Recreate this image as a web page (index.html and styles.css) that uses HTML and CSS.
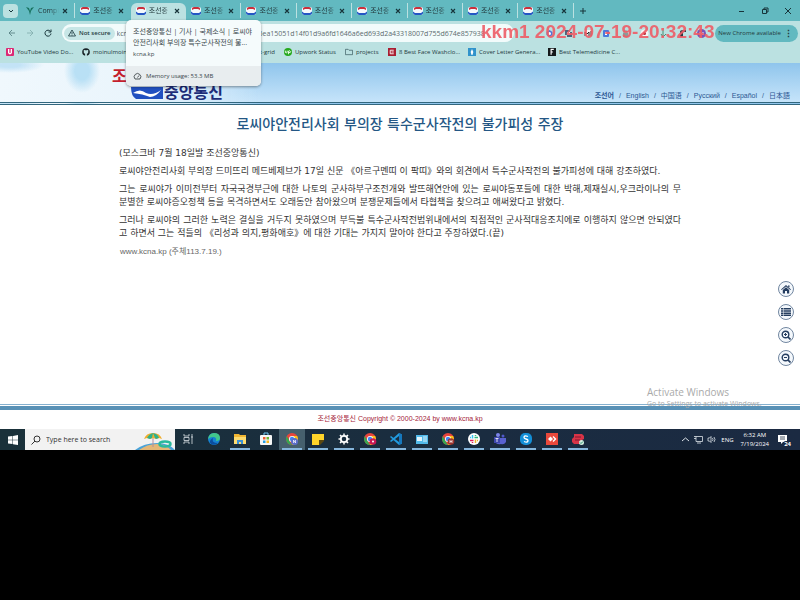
FILE: index.html
```html
<!DOCTYPE html>
<html lang="ko">
<head>
<meta charset="utf-8">
<title>조선중앙통신 | 기사 | 국제소식</title>
<link rel="stylesheet" href="styles.css">
</head>
<body>
<svg class="defs" aria-hidden="true">
  <symbol id="kcna" viewBox="0 0 10 8"><rect width="10" height="8" rx="2" fill="#f4f8fc"/><path d="M1 3V1.500Q1 0 3 0h4q2 0 2 1.500V3L7 2H3z" fill="#c9303c"/><path d="M0 4.500l2 1.500h6l2-1.500V6.500Q9 8 7.500 8h-5Q0 8 0 6z" fill="#2456c4"/></symbol>
  <symbol id="x" viewBox="0 0 6 6"><path d="M1 1l4 4M5 1L1 5" stroke="#17343a" stroke-width="1.100"/></symbol>
  <symbol id="chrome" viewBox="0 0 14 14"><circle cx="7" cy="7" r="6" fill="#e8453c"/><path d="M1.800 4L5 10l2 3A6 6 0 0 1 1.800 4z" fill="#33a852"/><path d="M7 4h5.200A6 6 0 0 1 7 13l3-5z" fill="#fbc116"/><circle cx="7" cy="7" r="3" fill="#fff"/><circle cx="7" cy="7" r="2.200" fill="#4285f4"/></symbol>
</svg>

<div class="browser">
  <div class="tabs">
    <button class="menu" aria-label="Search tabs"><svg viewBox="0 0 8 8" width="8" height="8"><path d="M2 3l2 2 2-2" fill="none" stroke="#17343a"/></svg></button>
    <div class="tab"><svg class="fav" viewBox="0 0 10 8"><path d="M1 0l3 1 1 3 1-3 3-1-3 4-1 4-1-4z" fill="#17725f"/></svg><span>Compi</span><svg class="x"><use href="#x"/></svg></div>
    <div class="tab"><svg class="fav"><use href="#kcna"/></svg><span>조선중</span><svg class="x"><use href="#x"/></svg></div>
    <div class="tab active"><svg class="fav"><use href="#kcna"/></svg><span>조선중</span><svg class="x"><use href="#x"/></svg></div>
    <div class="tab"><svg class="fav"><use href="#kcna"/></svg><span>조선중</span><svg class="x"><use href="#x"/></svg></div>
    <div class="tab"><svg class="fav"><use href="#kcna"/></svg><span>조선중</span><svg class="x"><use href="#x"/></svg></div>
    <div class="tab"><svg class="fav"><use href="#kcna"/></svg><span>조선중</span><svg class="x"><use href="#x"/></svg></div>
    <div class="tab"><svg class="fav"><use href="#kcna"/></svg><span>조선중</span><svg class="x"><use href="#x"/></svg></div>
    <div class="tab"><svg class="fav"><use href="#kcna"/></svg><span>조선중</span><svg class="x"><use href="#x"/></svg></div>
    <div class="tab"><svg class="fav"><use href="#kcna"/></svg><span>조선중</span><svg class="x"><use href="#x"/></svg></div>
    <div class="tab"><svg class="fav"><use href="#kcna"/></svg><span>조선중</span><svg class="x"><use href="#x"/></svg></div>
    <button class="plus" aria-label="New tab"><svg viewBox="0 0 8 8" width="8" height="8"><path d="M4 1v6M1 4h6" stroke="#17343a"/></svg></button>
    <div class="winctl">
      <svg viewBox="0 0 8 8"><path d="M1 4.500h5" stroke="#17343a"/></svg>
      <svg viewBox="0 0 8 8"><path d="M1.500 2.500h4v4h-4zM3 2V1h4v4H6" fill="none" stroke="#17343a"/></svg>
      <svg viewBox="0 0 8 8"><path d="M1 1l6 6M7 1L1 7" stroke="#17343a"/></svg>
    </div>
  </div>

  <div class="toolbar">
    <button aria-label="Back"><svg viewBox="0 0 8 8"><path d="M7 4H1M4 1L1 4l3 3" fill="none" stroke="#517a7c" stroke-width=".8"/></svg></button>
    <button aria-label="Forward"><svg viewBox="0 0 8 8"><path d="M1 4h6M4 1l3 3-3 3" fill="none" stroke="#7fa9aa" stroke-width=".8"/></svg></button>
    <button aria-label="Reload"><svg viewBox="0 0 8 8"><path d="M6.500 2.500A3 3 0 1 0 7 4.500M7 .5v2.500H4.500" fill="none" stroke="#17343a"/></svg></button>
    <div class="address">
      <span class="secure"><svg viewBox="0 0 8 8" width="8" height="8"><path d="M4 1l3.500 6h-7zM4 3v2M4 5.500v1" fill="none" stroke="#17343a" stroke-width=".8"/></svg>Not secure</span>
      <input type="text" aria-label="Address" value="kcna.kp/kp/article/q/1f8d03b5ac72e94d3086ea15051d14f01d9a6fd1646a6ed693d2a43318007d755d674e857938">
    </div>
    <div class="ext">
      <svg viewBox="0 0 9 9"><path d="M4.500 1l3 2v3l-3 2-3-2V3z" fill="#4f74d6"/><circle cx="4.500" cy="4.500" r="1.500" fill="#fff"/></svg>
      <svg viewBox="0 0 9 9"><path d="M1 1h5v2h2v5H3V6H1z" fill="#50627a"/><path d="M3 3h3v3H3z" fill="#fff"/></svg>
      <svg viewBox="0 0 9 9"><path d="M1 1h7v6H1z" fill="#f8f8f8"/><path d="M2 7V3l2 2 2-2v4M8 2v5" fill="none" stroke="#222"/></svg>
      <svg viewBox="0 0 9 9"><rect x="1" y="1" width="6" height="7" rx="1" fill="#4b79dc"/><path d="M3 3h2v3H3z" fill="#fff"/></svg>
      <svg viewBox="0 0 9 9"><rect x="2" y="4" width="5" height="4" fill="#8b9b99"/><path d="M3 4V2h3v2" fill="none" stroke="#8b9b99"/></svg>
      <svg viewBox="0 0 9 9"><circle cx="4.500" cy="4.500" r="4" fill="#f5f5f5"/><circle cx="4.500" cy="4.500" r="1.500" fill="#b82935"/></svg>
      <svg viewBox="0 0 9 9"><path d="M4 1v7M2 5l2 3 3-3" fill="none" stroke="#4a8b70"/></svg>
      <svg viewBox="0 0 9 9"><path d="M2 8V3q0-2 3-2h3v2H5v5z" fill="#2c393f"/></svg>
      <svg viewBox="0 0 9 9"><circle cx="4.500" cy="4.500" r="4.500" fill="#7b52b8"/><path d="M3 6V3l3 3V3" fill="none" stroke="#fff" stroke-width=".8"/></svg>
    </div>
    <button class="update">New Chrome available <b>⋮</b></button>
  </div>

  <nav class="bookmarks">
    <a class="b1" href="#"><svg viewBox="0 0 9 9"><rect width="9" height="9" rx="1" fill="#dc2a75"/><path d="M3 1v4.500q1.500 2 3 0V1" fill="none" stroke="#fff" stroke-width="1.500"/></svg>YouTube Video Do...</a>
    <a class="b2" href="#"><svg viewBox="0 0 9 9"><circle cx="4.500" cy="4.500" r="4.300" fill="#182226"/><path d="M2 2l1.500.5h2L7 2v3q-.5 1.500-1.500 1.500V9h-2V6.500Q2 6 2 5z" fill="#bfe2e2"/></svg>moinulmoin</a>
    <a class="b3" href="#">react-grid</a>
    <a class="b4" href="#"><svg viewBox="0 0 9 9"><circle cx="4.500" cy="4.500" r="4.500" fill="#25a81b"/><path d="M1.500 3v2q1 1 2 0V3M5 7V3.500q2-1 2.500.5 0 2-2.500 1" fill="none" stroke="#fff"/></svg>Upwork Status</a>
    <a class="b5" href="#"><svg viewBox="0 0 9 9"><path d="M.5 1.500h3l1 1h4v5h-8z" fill="none" stroke="#39595e" stroke-width=".8"/></svg>projects</a>
    <a class="b6" href="#"><svg viewBox="0 0 9 9"><rect width="9" height="9" fill="#a91e32"/><path d="M6.500 2.500h-4v4h4M4 4.500h2.500" fill="none" stroke="#fff"/></svg>8 Best Face Washclo...</a>
    <a class="b7" href="#"><svg viewBox="0 0 9 9"><rect width="9" height="9" fill="#3193cb"/><path d="M4.500 1L6 4.500 5 8H4L3 4.500z" fill="#fff"/></svg>Cover Letter Genera...</a>
    <a class="b8" href="#"><svg viewBox="0 0 9 9"><rect width="9" height="9" fill="#15191b"/><path d="M3.500 7.500v-6h3M3.500 4.500h2" fill="none" stroke="#fff" stroke-width="1.300"/></svg>Best Telemedicine C...</a>
  </nav>

  <div class="tooltip" role="tooltip">
    <div class="tip-body"><p>조선중앙통신 | 기사 | 국제소식 | 로씨야<br>안전리사회 부의장 특수군사작전의 불...</p><small>kcna.kp</small></div>
    <div class="tip-foot"><svg viewBox="0 0 9 9" width="9" height="9"><path d="M2 7a3.300 3.300 0 1 1 5 0zM4.500 5.500L6 3.500" fill="none" stroke="#43494d" stroke-width=".9"/></svg>Memory usage: 53.3 MB</div>
  </div>
  <div class="stamp">kkm1 2024-07-19-20:32:43</div>
</div>

<div class="site">
  <header>
    <div class="logo">
      <span class="red">조선</span>
      <span class="blue"><svg viewBox="0 0 32 12" width="32" height="12"><path d="M0 0h32v12H5Q0 9 0 0z" fill="#2150c0"/><path d="M2 6q7-5 13 0 7 3 15-3-5 7-11 7Q12 7 2 6z" fill="#fff"/></svg>중앙통신</span>
    </div>
    <nav class="langs"><a class="on" href="#">조선어</a><i>/</i><a href="#">English</a><i>/</i><a href="#">中国语</a><i>/</i><a href="#">Русский</a><i>/</i><a href="#">Español</a><i>/</i><a href="#">日本語</a></nav>
  </header>
  <main>
    <article>
      <h1>로씨야안전리사회 부의장 특수군사작전의 불가피성 주장</h1>
      <p>(모스크바 7월 18일발 조선중앙통신)</p>
      <p>로씨야안전리사회 부의장 드미뜨리 메드베제브가 17일 신문 《아르구멘띠 이 팍띠》와의 회견에서 특수군사작전의 불가피성에 대해 강조하였다.</p>
      <p><span class="full">그는 로씨야가 이미전부터 자국국경부근에 대한 나토의 군사하부구조전개와 발뜨해연안에 있는 로씨야동포들에 대한 박해,제재실시,우크라이나의 무</span>분별한 로씨야증오정책 등을 목격하면서도 오래동안 참아왔으며 분쟁문제들에서 타협책을 찾으려고 애써왔다고 밝혔다.</p>
      <p><span class="full">그러나 로씨야의 그러한 노력은 결실을 거두지 못하였으며 부득불 특수군사작전범위내에서의 직접적인 군사적대응조치에로 이행하지 않으면 안되였다</span>고 하면서 그는 적들의 《리성과 의지,평화애호》에 대한 기대는 가지지 말아야 한다고 주장하였다.(끝)</p>
      <p class="source">www.kcna.kp (주체113.7.19.)</p>
    </article>
    <div class="side">
      <button aria-label="Home"><svg viewBox="0 0 10 10"><path d="M0 5.500L5 1l5 4.500-.7.600L5 2.500.7 6.100zM7 1.500h1.500v2L7 2.500zM1.800 6L5 3.300 8.200 6v3.500H6V7H4v2.500H1.800z"/></svg></button>
      <button aria-label="List"><svg viewBox="0 0 10 10"><path d="M0 1h2v1.500H0zM2.500 1H10v1.500H2.500zM0 3.200h2v1.500H0zM2.500 3.200H10v1.500H2.500zM0 5.400h2v1.500H0zM2.500 5.400H10v1.500H2.500zM0 7.600h2v1.500H0zM2.500 7.600H10v1.500H2.500z"/></svg></button>
      <button aria-label="Zoom in"><svg viewBox="0 0 10 10"><circle cx="4.500" cy="4.500" r="3.300" fill="none" stroke="#263e60" stroke-width="1.400"/><path d="M3 4.500h3M4.500 3v3" stroke="#263e60"/><path d="M7 7l2.500 2.500" stroke="#263e60" stroke-width="1.700"/></svg></button>
      <button aria-label="Zoom out"><svg viewBox="0 0 10 10"><circle cx="4.500" cy="4.500" r="3.300" fill="none" stroke="#263e60" stroke-width="1.400"/><path d="M3 4.500h3" stroke="#263e60"/><path d="M7 7l2.500 2.500" stroke="#263e60" stroke-width="1.700"/></svg></button>
    </div>
    <div class="activate"><div>Activate Windows</div><small>Go to Settings to activate Windows.</small></div>
  </main>
  <footer>조선중앙통신 Copyright © 2000-2024 by www.kcna.kp</footer>
</div>

<div class="taskbar">
  <button class="start" aria-label="Start"><svg viewBox="0 0 10 10" width="10" height="10"><path d="M0 1.500L4.500 1v3.700H0zM5 .9L10 0v4.700H5zM0 5.200h4.500V9L0 8.500zM5 5.200h5V10l-5-.8z" fill="#fff"/></svg></button>
  <label class="search"><svg viewBox="0 0 10 10" width="10" height="10"><circle cx="6" cy="4" r="3" fill="none" stroke="#333"/><path d="M4 6L.5 9.500" stroke="#333"/></svg><input type="text" placeholder="Type here to search" aria-label="Search"><svg viewBox="0 0 40 20" width="40" height="20"><path d="M0 20Q9 13 22 13q12 0 18 7z" fill="#4ba3d8"/><path d="M4 20q8-6 18-6 9 0 14 6z" fill="#e3b777"/><path d="M18 4v13" stroke="#b58e9c"/><path d="M9 9q2-6 9-6t9 6l-3-1-3 1-3-1-3 1-3-1z" fill="#f0ad2d"/><path d="M12 8q2-4 6-5l-1 5-2 1zM20 8l-2-5q5 1 6 5l-3 1z" fill="#2eb18c"/><ellipse cx="30" cy="14" rx="5.500" ry="2.500" fill="none" stroke="#29b99c" stroke-width="2.500"/></svg></label>
  <div class="apps">
    <button aria-label="Task view"><svg viewBox="0 0 14 14"><path d="M3 2v2h5V2M3 12v-2h5v2M3 5.500h5v3H3zM11 2v10M10 5h2" fill="none" stroke="#d8e0e3" stroke-width=".8"/></svg></button>
    <button aria-label="Edge"><svg viewBox="0 0 14 14"><circle cx="7" cy="7" r="6" fill="#1683d2"/><path d="M1 7q1-6 6-6 6 0 6 5 0 3-4 3 1-4-3-4-3 0-5 2z" fill="#42c88b"/><path d="M6 6q-2 5 5 5-3 3-7 1Q1 9 6 6z" fill="#0b4e9f"/></svg></button>
    <button class="open" aria-label="Explorer"><svg viewBox="0 0 14 14"><path d="M1 2h5l1 1h6v9H1z" fill="#f2b632"/><path d="M1 5h12v7H1z" fill="#fddc70"/><path d="M4 12V8h6v4H8v-2H6v2z" fill="#3b91d6"/></svg></button>
    <button aria-label="Store"><svg viewBox="0 0 14 14"><path d="M5 3V1h4v2" fill="none" stroke="#6ec3ef"/><rect x="1" y="3" width="12" height="10" rx="1" fill="#f6f7f7"/><path d="M4 5h2.500v2.500H4z" fill="#ee5e35"/><path d="M7.500 5H10v2.500H7.500z" fill="#70b733"/><path d="M4 8.500h2.500V11H4z" fill="#269ce2"/><path d="M7.500 8.500H10V11H7.500z" fill="#f4b622"/></svg></button>
    <button class="open current" aria-label="Chrome"><svg viewBox="0 0 14 14"><use href="#chrome"/><circle cx="9.500" cy="9.500" r="3.500" fill="#5a6ecb"/><path d="M8.500 11V8l2 3V8" stroke="#fff" fill="none" stroke-width=".7"/></svg></button>
    <button class="open" aria-label="Notes"><svg viewBox="0 0 14 14"><path d="M1 2h12v6H8v5H1z" fill="#ffd42a"/><path d="M8 8h5v1l-4 4H8z" fill="#5c4810"/></svg></button>
    <button class="open" aria-label="Settings"><svg viewBox="0 0 14 14"><circle cx="7" cy="7" r="3.200" fill="none" stroke="#fff" stroke-width="1.800"/><path d="M7 1.500v2M7 10.500v2M1.500 7h2M10.500 7h2M3 3l1.500 1.500M9.500 9.500L11 11M11 3L9.500 4.500M4.500 9.500L3 11" stroke="#fff" stroke-width="1.500"/></svg></button>
    <button class="open" aria-label="Chrome"><svg viewBox="0 0 14 14"><use href="#chrome"/><circle cx="10" cy="9.500" r="3.300" fill="#c81754"/><circle cx="10" cy="9.500" r="1" fill="#fff"/></svg></button>
    <button class="open" aria-label="VS Code"><svg viewBox="0 0 14 14"><path d="M10 1l3 1.500v9L10 13 1 5l1-1 8 6V4l-8 6-1-1z" fill="#229bdf"/><path d="M10 1l3 1.500v9L10 13z" fill="#1678bd"/></svg></button>
    <button class="open" aria-label="Remote"><svg viewBox="0 0 14 14"><path d="M1 3h12v9H1z" fill="#52b9e9"/><path d="M2 5h5v4H2z" fill="#e3f5fc"/><path d="M8 5h4M8 7h4M8 9h4" stroke="#fff" stroke-width=".8"/></svg></button>
    <button class="open" aria-label="Chrome"><svg viewBox="0 0 14 14"><use href="#chrome"/><circle cx="10" cy="9.500" r="3.300" fill="#9d342f"/><path d="M9 11V8M11 11V8M9 9.500h2" stroke="#fff" stroke-width=".7"/></svg></button>
    <button class="open" aria-label="Slack"><svg viewBox="0 0 14 14"><circle cx="7" cy="7" r="6" fill="#fff"/><path d="M5.500 3v3.500M3 5.500h1" stroke="#36c5f0" stroke-width="1.500"/><path d="M7.500 5.500H11M8.500 3v1" stroke="#2eb67d" stroke-width="1.500"/><path d="M8.500 7.500V11M10 8.500h1" stroke="#ecb22e" stroke-width="1.500"/><path d="M3 8.500h3.500M5.500 10v1" stroke="#e01e5a" stroke-width="1.500"/></svg></button>
    <button class="open" aria-label="Teams"><svg viewBox="0 0 14 14"><circle cx="5" cy="3" r="2" fill="#7b83eb"/><circle cx="10" cy="4" r="1.500" fill="#5059c9"/><path d="M2 6h11v4q-2 3-5 2-4 1-6-2z" fill="#5962cf"/><path d="M1 5h6v6H1z" fill="#3e48ac"/><path d="M2.500 6.500h3M4 6.500V10" stroke="#fff" stroke-width=".8"/></svg></button>
    <button class="open" aria-label="Skype"><svg viewBox="0 0 14 14"><rect x="1" y="1" width="12" height="12" rx="5" fill="#138fd8"/><path d="M9 4.500Q5 3 5 5.500q0 1 2 1.500t2 1.500Q9 11 5 9.500" fill="none" stroke="#fff" stroke-width="1.300"/></svg></button>
    <button class="open" aria-label="AnyDesk"><svg viewBox="0 0 14 14"><path d="M1 1h12v12H1z" fill="#ea493c"/><path d="M5.500 4.500L8 7 5.500 9.500 3 7z" fill="#fff"/><path d="M7.500 5l1-1 3 3-3 3-1-1 2-2z" fill="#fff"/></svg></button>
    <button class="open" aria-label="Recorder"><svg viewBox="0 0 14 14"><path d="M3 2h8l2 2v3l-2 1 1 3-3 1H3l-2-2V7l2-2z" fill="#d73447"/><path d="M4 5h6M4 8h5" stroke="#7f1730"/><circle cx="10.500" cy="10.500" r="2.500" fill="#d4f0e1"/><path d="M9 10.500l1 1 2-2" stroke="#26876a" fill="none"/></svg></button>
  </div>
  <div class="tray">
    <svg viewBox="0 0 9 9"><path d="M1 6l3.500-3L8 6" fill="none" stroke="#dde3e8"/></svg>
    <svg viewBox="0 0 9 9"><path d="M2 1.500h6.500v5H2zM0 1.500h2M0 3.500h2M3 8h4" fill="none" stroke="#dde3e8" stroke-width=".8"/></svg>
    <svg viewBox="0 0 9 9"><path d="M1 3h1.500L4 1.500v6L2.500 6H1zM5.500 3q1 1.500 0 3M7 2q2 2.500 0 5" fill="none" stroke="#dde3e8" stroke-width=".8"/></svg>
    <span>ENG</span>
    <time>6:32 AM<br>7/19/2024</time>
    <button class="notice" aria-label="Notifications"><svg viewBox="0 0 12 12" width="12" height="12"><path d="M0 1h9v7H5L3 10V8H0z" fill="#fff"/><path d="M2 3h5M2 5h5" stroke="#1c2c40" stroke-width=".8"/></svg><b>24</b></button>
  </div>
</div>
</body>
</html>
```

FILE: styles.css
```css
* { box-sizing: border-box; }
body { margin: 0; background: #000; font-family: "Open Sans", "Noto Sans CJK KR", sans-serif; font-size: 6px; color: #23393d; }
button, input { font: inherit; color: inherit; border: 0; background: none; padding: 0; margin: 0; }
a { color: inherit; text-decoration: none; }
svg { display: block; flex: none; }
p, h1 { margin: 0; }
.defs { position: absolute; width: 0; height: 0; }

.browser { position: relative; z-index: 2; background: #bbe1e1; }
.tabs { display: flex; align-items: center; height: 21px; background: #62b9c0; }
.menu { display: grid; place-items: center; width: 15px; height: 14px; margin: 0 2px 0 3px; border-radius: 4px; background: #bbe1e1; }
.tab { display: flex; align-items: center; flex: 0 1 6.92%; height: 15px; gap: 3px; padding: 0 6px 0 5px; border-right: 1px solid #bbe1e1; font-size: 7px; line-height: 15px; }
.tab span { flex: 1; overflow: hidden; white-space: nowrap; -webkit-mask-image: linear-gradient(90deg, #000 60%, transparent); mask-image: linear-gradient(90deg, #000 60%, transparent); }
.tab.active { height: 21px; margin-top: 6px; padding-bottom: 6px; border-right: 0; border-radius: 6px 6px 0 0; background: #bbe1e1; }
.tab:has(+ .active) { border-right-color: transparent; }
.fav { width: 10px; height: 8px; }
.x { width: 6px; height: 6px; }
.plus { margin-left: 5px; }
.winctl { display: flex; gap: 15px; margin-left: auto; padding-right: 8px; }
.winctl svg { width: 8px; height: 8px; }

.toolbar { display: flex; align-items: center; height: 24px; padding: 0 2px 0 8px; }
.toolbar > button { margin-right: 10px; }
.toolbar > button svg { width: 8px; height: 8px; }
.address { display: flex; align-items: center; flex: 1; height: 18px; padding-left: 2px; border-radius: 9px; background: #f2fbfb; }
.secure { display: flex; align-items: center; gap: 3px; height: 13px; padding: 0 4px; border-radius: 7px; background: #c7e6e6; font-weight: 600; white-space: nowrap; }
.address input { flex: 1; min-width: 0; margin-left: 2px; font-size: 7px; color: #5b6b6e; }
.ext { display: flex; gap: 10px; margin: 0 9px 0 31px; }
.ext svg { width: 9px; height: 9px; }
.toolbar .update { display: flex; align-items: center; justify-content: space-between; height: 17px; margin: 0; gap: 3px; padding: 0 5px 0 3px; border-radius: 9px; background: #62b9c0; white-space: nowrap; }
.update b { font-size: 9px; }

.bookmarks { display: flex; align-items: center; height: 18px; padding: 0 0 4px 6px; white-space: nowrap; }
.bookmarks a { display: flex; align-items: center; gap: 3px; }
.bookmarks svg { width: 8px; height: 8px; }
.b1 { width: 76px; }
.b2 { width: 164px; }
.b3 { width: 38px; justify-content: flex-end; padding-right: 9px; }
.b4 { width: 61px; }
.b5 { width: 43px; }
.b6 { width: 80px; }
.b7 { width: 80px; }

.tooltip { position: absolute; left: 126px; top: 20px; width: 135px; border-radius: 5px; overflow: hidden; background: #f5fbfc; box-shadow: 0 1px 3px #0006; color: #39474b; }
.tip-body { height: 46px; padding: 6px 6px 0 7px; white-space: nowrap; }
.tip-body p { font-size: 7px; line-height: 11px; }
.tip-body small { display: block; font-size: 6px; line-height: 13px; }
.tip-foot { display: flex; align-items: center; gap: 4px; height: 20px; padding-left: 7px; background: #e8edef; }
.stamp { position: absolute; left: 481px; top: 20px; font: bold 19px/24px "Liberation Sans", Arial, sans-serif; color: #ee5d67; opacity: .9; white-space: nowrap; }

.site { background: #fff; font-family: "Liberation Sans", "Noto Sans CJK KR", sans-serif; }
header { display: flex; justify-content: space-between; align-items: flex-end; height: 42px; padding: 0 10px 0 112px; border-bottom: 3px double #33677e; background: radial-gradient(ellipse 18px 22px at 82px 8px, #b9e0f5 40%, transparent), radial-gradient(ellipse 34px 8px at 10px 2px, #c3e3f6 30%, transparent), linear-gradient(90deg, #f0f8fd, #eaf5fc 130px, #d5ebfa 200px, transparent 262px), linear-gradient(#8fc5ec, #c6e4fa); }
.logo { display: flex; flex-direction: column; padding-bottom: 1px; font-weight: bold; font-size: 16px; line-height: 16px; }
.red { color: #c41f2d; }
.blue { display: flex; align-items: center; gap: 1px; margin-left: 19px; color: #1c2c78; }
.langs { display: flex; gap: 5px; font-size: 7px; line-height: 12px; color: #2b5792; }
.langs i { font-style: normal; }
.langs .on { font-weight: bold; }

main { position: relative; min-height: 301px; }
article { width: 562px; max-width: 80%; margin: 0 auto; padding-top: 10px; font: 9px/13px "DejaVu Sans", "Noto Sans CJK KR", sans-serif; color: #333; }
article h1 { margin-bottom: 14px; font: 500 14px/18px "DejaVu Sans", "Noto Sans CJK KR", sans-serif; color: #245785; text-align: center; }
article p { margin-bottom: 5px; }
.full { display: block; text-align: justify; text-align-last: justify; white-space: nowrap; }
article .source { padding: 1px; font: 8px/12px "Liberation Sans", "Noto Sans CJK KR", sans-serif; color: #666; }
.side { position: absolute; right: 6px; top: 176px; display: grid; gap: 7px; }
.side button { display: grid; place-items: center; width: 16px; height: 16px; border: 1px solid #7186a0; border-radius: 50%; background: #f4f8fc; }
.side svg { width: 10px; height: 10px; fill: #263e60; }
.activate { position: absolute; z-index: 1; left: 647px; top: 280px; font: 10px/14px "Open Sans", sans-serif; color: #aaa; white-space: nowrap; }
.activate small { display: block; font-size: 7px; line-height: 10px; }
footer { position: relative; padding: 4px 0 5px; border-top: 4px solid #5991b6; background: #fff; text-align: center; font-size: 7px; line-height: 10px; color: #a52339; }
footer::before { content: ""; position: absolute; left: 0; right: 0; top: -6px; height: 1px; background: #86b1cf; }

.taskbar { display: flex; align-items: stretch; height: 21px; background: linear-gradient(90deg, #1a313a, #1a2c40 60%, #1b2a42); color: #fff; }
.start { display: grid; place-items: center; width: 25px; }
.search { display: flex; align-items: center; gap: 5px; width: 150px; padding-left: 6px; background: #f2f2f2; color: #333; }
.search input { flex: 1; min-width: 0; font-size: 7px; }
.search input::placeholder { color: #333; opacity: 1; }
.apps { display: flex; }
.apps button { display: grid; place-items: center; width: 26px; border: solid transparent; border-width: 0 3px 2px; background-clip: padding-box; }
.apps .open { border-image: linear-gradient(90deg, transparent 3px, #86b6dc 3px, #86b6dc 23px, transparent 23px) 0 3 2 3; }
.apps .current { background: #46606d; background-clip: border-box; }
.apps svg { width: 14px; height: 14px; }
.tray { display: flex; align-items: center; gap: 4px; margin-left: auto; padding-right: 8px; }
.tray > svg { width: 9px; height: 9px; }
.tray span { margin-left: 1px; }
.tray time { margin: 0 5px 0 3px; line-height: 9px; text-align: center; }
.notice { position: relative; width: 14px; height: 14px; }
.notice b { position: absolute; right: 0; bottom: 0; padding: 0 1px; border-radius: 4px; background: #1b2a42; line-height: 6px; }
```
